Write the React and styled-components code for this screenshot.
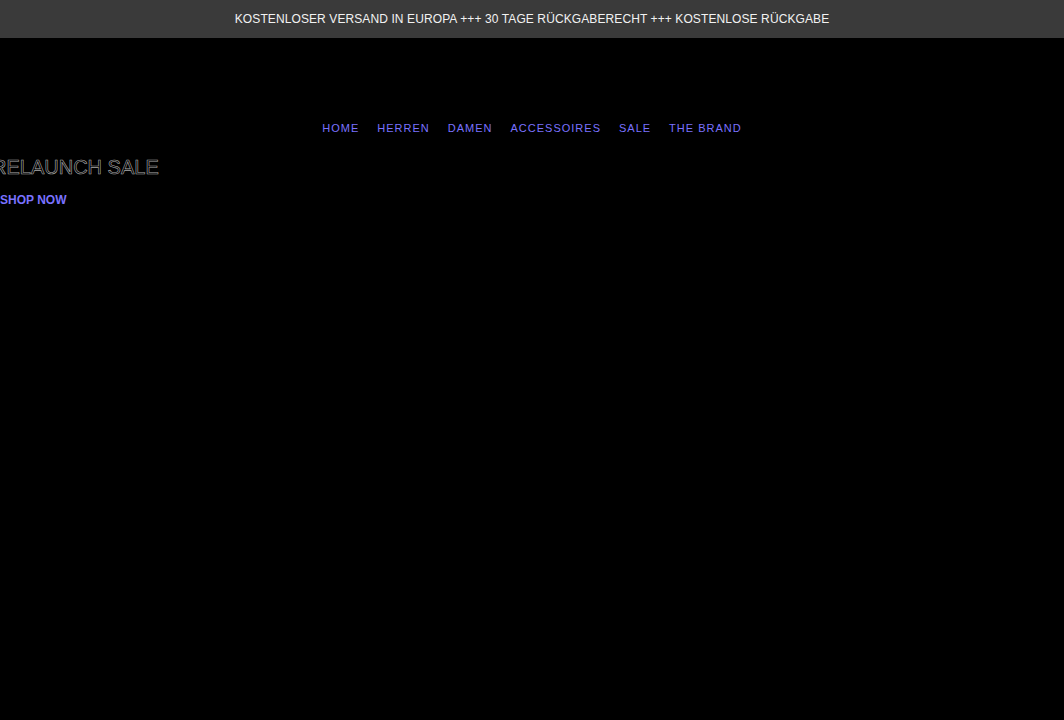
import React from "react";
import styled, { createGlobalStyle } from "styled-components";

const Global = createGlobalStyle`
  html, body { margin: 0; padding: 0; background: #000; }
  body { font-family: "Liberation Sans", Arial, sans-serif; overflow: hidden; }
`;

const Page = styled.div`
  width: 1064px;
  height: 720px;
  background: #000;
  overflow: hidden;
`;

const AnnouncementBar = styled.div`
  height: 38px;
  background: #3a3a3a;
  color: #f2f2f2;
  display: flex;
  align-items: center;
  justify-content: center;
  font-size: 12px;
  letter-spacing: 0.1px;
`;

const Header = styled.header`
  height: 80px;
`;

const Nav = styled.nav`
  display: flex;
  justify-content: center;
  gap: 18px;
  height: 19px;
  align-items: center;
`;

const NavLink = styled.a`
  color: #7a72ff;
  font-size: 11px;
  letter-spacing: 1px;
  text-decoration: none;
  text-transform: uppercase;
`;

const Hero = styled.section`
  padding-top: 18px;
`;

const HeroTitle = styled.h1`
  margin: 0 0 0 -8px;
  font-size: 20px;
  font-weight: 400;
  letter-spacing: 0;
  color: transparent;
  -webkit-text-stroke: 0.6px rgba(215, 215, 215, 0.8);
  line-height: 24px;
  white-space: nowrap;
`;

const ShopLink = styled.a`
  display: inline-block;
  margin-top: 14px;
  color: #7a72ff;
  font-size: 12px;
  font-weight: 700;
  text-decoration: none;
`;

const links = ["Home", "Herren", "Damen", "Accessoires", "Sale", "The Brand"];

export default function App() {
  return (
    <Page>
      <Global />
      <AnnouncementBar>
        KOSTENLOSER VERSAND IN EUROPA +++ 30 TAGE RÜCKGABERECHT +++ KOSTENLOSE RÜCKGABE
      </AnnouncementBar>
      <Header />
      <Nav>
        {links.map((l) => (
          <NavLink key={l} href="#">{l}</NavLink>
        ))}
      </Nav>
      <Hero>
        <HeroTitle>RELAUNCH SALE</HeroTitle>
        <ShopLink href="#">SHOP NOW</ShopLink>
      </Hero>
    </Page>
  );
}
